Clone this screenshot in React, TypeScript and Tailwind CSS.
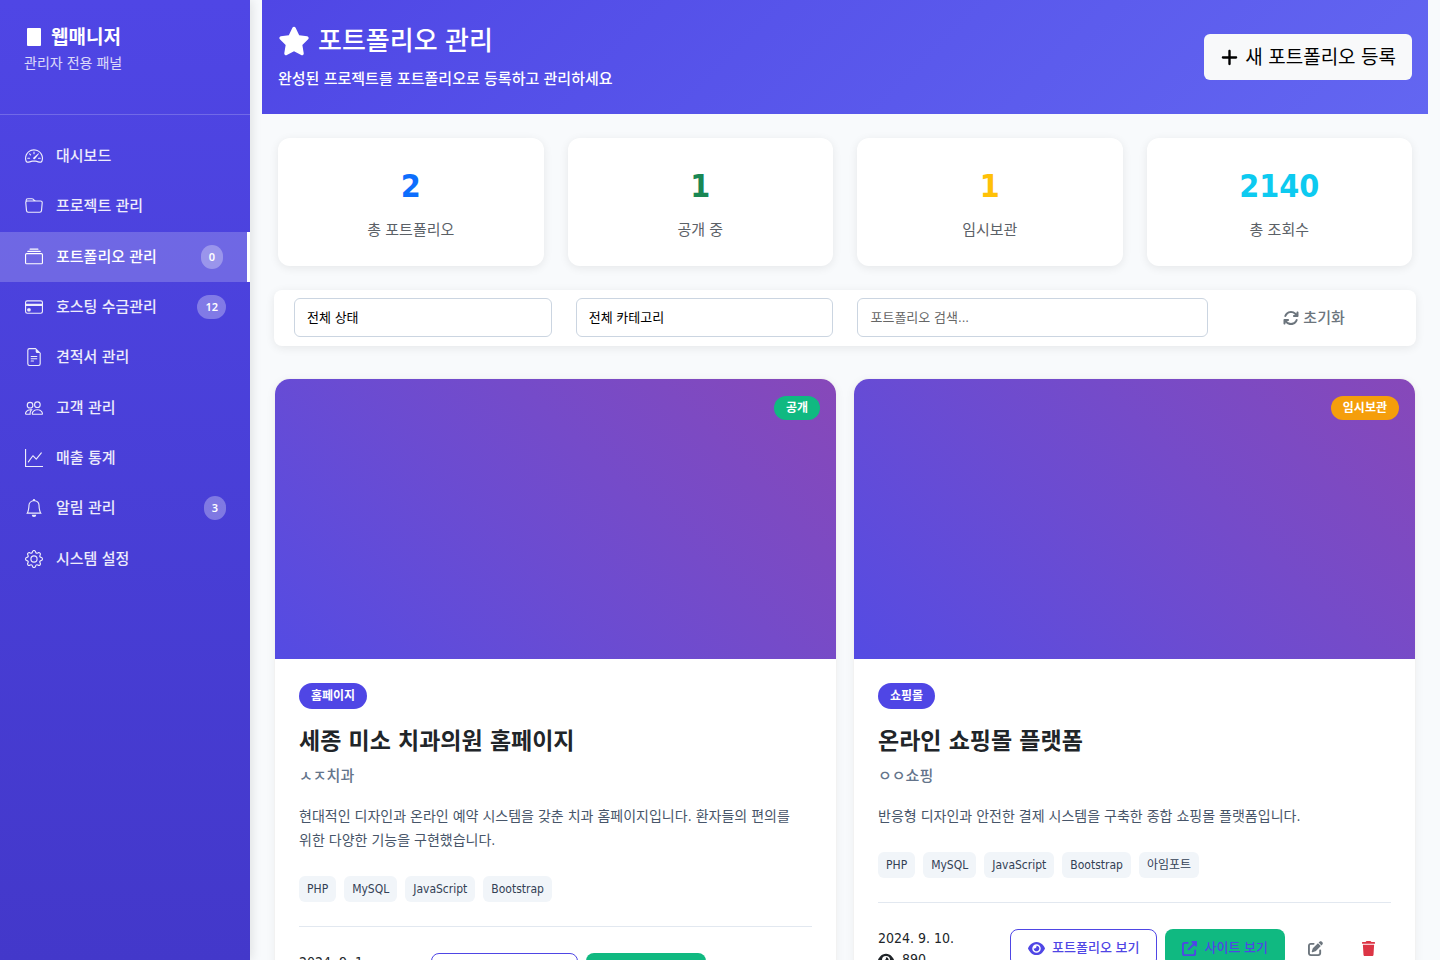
import React from 'react';
import {
  BsSpeedometer2,
  BsFolder,
  BsCollection,
  BsCreditCard,
  BsFileEarmarkText,
  BsPeople,
  BsGraphUp,
  BsBell,
  BsGear,
} from 'react-icons/bs';
import {
  FaStar,
  FaPlus,
  FaArrowsRotate,
  FaEye,
  FaUpRightFromSquare,
  FaPenToSquare,
  FaTrash,
} from 'react-icons/fa6';
import type { IconType } from 'react-icons';

interface MenuItem {
  label: string;
  icon: IconType;
  badge?: number;
  active?: boolean;
}

interface Portfolio {
  id: number;
  status: string;
  statusColor: string;
  category: string;
  title: string;
  client: string;
  description: string;
  tags: string[];
  date: string;
  views: number;
}

const MENU: MenuItem[] = [
  { label: '대시보드', icon: BsSpeedometer2 },
  { label: '프로젝트 관리', icon: BsFolder },
  { label: '포트폴리오 관리', icon: BsCollection, badge: 0, active: true },
  { label: '호스팅 수금관리', icon: BsCreditCard, badge: 12 },
  { label: '견적서 관리', icon: BsFileEarmarkText },
  { label: '고객 관리', icon: BsPeople },
  { label: '매출 통계', icon: BsGraphUp },
  { label: '알림 관리', icon: BsBell, badge: 3 },
  { label: '시스템 설정', icon: BsGear },
];

const STATS = [
  { label: '총 포트폴리오', value: 2, color: 'text-[#0d6efd]' },
  { label: '공개 중', value: 1, color: 'text-[#198754]' },
  { label: '임시보관', value: 1, color: 'text-[#ffc107]' },
  { label: '총 조회수', value: 2140, color: 'text-[#0dcaf0]' },
];

const PORTFOLIOS: Portfolio[] = [
  {
    id: 1,
    status: '공개',
    statusColor: 'bg-[#10b981]',
    category: '홈페이지',
    title: '세종 미소 치과의원 홈페이지',
    client: 'ㅅㅈ치과',
    description:
      '현대적인 디자인과 온라인 예약 시스템을 갖춘 치과 홈페이지입니다. 환자들의 편의를 위한 다양한 기능을 구현했습니다.',
    tags: ['PHP', 'MySQL', 'JavaScript', 'Bootstrap'],
    date: '2024. 9. 1.',
    views: 1250,
  },
  {
    id: 2,
    status: '임시보관',
    statusColor: 'bg-[#f59e0b]',
    category: '쇼핑몰',
    title: '온라인 쇼핑몰 플랫폼',
    client: 'ㅇㅇ쇼핑',
    description: '반응형 디자인과 안전한 결제 시스템을 구축한 종합 쇼핑몰 플랫폼입니다.',
    tags: ['PHP', 'MySQL', 'JavaScript', 'Bootstrap', '아임포트'],
    date: '2024. 9. 10.',
    views: 890,
  },
];

const Sidebar: React.FC = () => (
  <aside className="sticky top-0 z-10 h-screen w-[250px] shrink-0 bg-linear-to-b from-[#4f46e5] to-[#4338ca] text-white shadow-[2px_0_10px_rgba(0,0,0,0.1)]">
    <div className="h-[115px] border-b border-white/20 px-6 pt-6">
      <div className="flex h-[26px] items-center text-[19px] font-bold">
        <span className="ml-[3px] mr-2.5 h-[18px] w-3.5 rounded-[1px] bg-white"></span>
        웹매니저
      </div>
      <p className="mt-[3px] text-sm text-white/80">관리자 전용 패널</p>
    </div>

    <nav className="mt-4 grid h-[453px] auto-rows-fr">
      {MENU.map(({ label, icon: Icon, badge, active }) => (
        <a
          key={label}
          href="#"
          className={`flex items-center px-6 text-[15px] font-medium ${
            active ? 'border-r-3 border-white bg-white/20 text-white' : 'text-white/90'
          }`}
        >
          <Icon className="mr-3 size-5 p-px" />
          <span className="flex-1">{label}</span>
          {badge !== undefined && (
            <span className="rounded-full bg-white/30 px-2 py-1 font-['Noto_Sans',sans-serif] text-[11px] leading-4 font-semibold text-white">
              {badge}
            </span>
          )}
        </a>
      ))}
    </nav>
  </aside>
);

const PageHeader: React.FC = () => (
  <header className="flex h-[114px] items-center justify-between bg-linear-135 from-[#4f46e5] to-[#6366f1] px-4 text-white">
    <div>
      <h1 className="mb-2 flex items-center gap-2 text-[26px] leading-9 font-medium">
        <FaStar className="size-8" />
        포트폴리오 관리
      </h1>
      <p className="text-[15px] leading-6 font-medium">완성된 프로젝트를 포트폴리오로 등록하고 관리하세요</p>
    </div>
    <button className="flex h-[46px] items-center gap-1.5 rounded-md bg-[#f8f9fa] px-4 text-[19px] text-black">
      <FaPlus className="size-[19px]" />
      새 포트폴리오 등록
    </button>
  </header>
);

const Filters: React.FC = () => (
  <form className="mx-3 mt-6 grid h-14 grid-cols-[258fr_258fr_351fr_164fr] items-start gap-6 rounded-lg bg-white px-5 pt-2 text-[13px] shadow-[0_2px_10px_rgba(0,0,0,0.08)]">
    <select
      aria-label="상태"
      className="h-[39px] w-full appearance-none rounded-md border border-[#cbd5e1] bg-white px-3 text-black"
    >
      <option>전체 상태</option>
    </select>
    <select
      aria-label="카테고리"
      className="h-[39px] w-full appearance-none rounded-md border border-[#cbd5e1] bg-white px-3 text-black"
    >
      <option>전체 카테고리</option>
    </select>
    <input
      type="text"
      aria-label="포트폴리오 검색"
      placeholder="포트폴리오 검색..."
      className="h-[39px] w-full rounded-md border border-[#cbd5e1] bg-white px-3 placeholder:text-[#666]"
    />
    <button
      type="reset"
      className="flex h-10 w-full items-center justify-center gap-1 text-[15px] font-medium text-[#6c757d]"
    >
      <FaArrowsRotate className="size-4" />
      초기화
    </button>
  </form>
);

const PortfolioCard: React.FC<{ item: Portfolio }> = ({ item }) => (
  <article className="overflow-hidden rounded-2xl border border-black/5 bg-white shadow-[0_2px_10px_rgba(0,0,0,0.05)]">
    <div className="flex h-[280px] items-start justify-end bg-linear-45 from-[#544be3] to-[#8748b9] px-4 pt-[17px]">
      <span className={`rounded-full px-3 py-1 text-xs leading-4 font-bold text-white ${item.statusColor}`}>
        {item.status}
      </span>
    </div>

    <div className="p-6">
      <span className="inline-block rounded-full bg-[#4f46e5] px-3 py-[5px] text-xs leading-4 font-bold text-white">
        {item.category}
      </span>
      <h2 className="mt-[18px] text-[23px] leading-7 font-bold text-[#212529]">{item.title}</h2>
      <p className="mt-[9px] text-[15px] leading-6 font-medium text-[#64748b]">{item.client}</p>
      <p className="mt-4 text-sm leading-6 break-keep text-[#475569]">{item.description}</p>

      <ul className="mt-6 flex flex-wrap gap-2">
        {item.tags.map((tag) => (
          <li key={tag} className="rounded-md bg-[#f1f5f9] px-2 py-[5px] text-xs leading-4 text-[#334155]">
            {tag}
          </li>
        ))}
      </ul>

      <div className="mt-6 flex items-start justify-between border-t border-[#e2e8f0] pt-6">
        <div className="pt-px text-sm leading-[21px] text-[#212529]">
          <div>{item.date}</div>
          <div className="flex items-center gap-2">
            <FaEye className="size-4" />
            {item.views}
          </div>
        </div>
        <div className="flex gap-2 pt-0.5 text-[13px] font-medium">
          <button className="flex h-[38px] items-center gap-[7px] rounded-lg border border-[#4f46e5] px-[17px] text-[#4f46e5]">
            <FaEye className="size-[17px]" />
            포트폴리오 보기
          </button>
          <a href="#" className="flex h-[38px] items-center gap-[7px] rounded-lg bg-[#10b981] px-[17px] text-[#4f46e5]">
            <FaUpRightFromSquare className="size-[15px]" />
            사이트 보기
          </a>
          <button aria-label="수정" className="flex h-[38px] w-[45px] items-center justify-center text-[#6c757d]">
            <FaPenToSquare className="size-[15px]" />
          </button>
          <button aria-label="삭제" className="flex h-[38px] w-[45px] items-center justify-center text-[#dc3545]">
            <FaTrash className="size-[15px]" />
          </button>
        </div>
      </div>
    </div>
  </article>
);

export default function App() {
  return (
    <div className="flex min-h-screen items-start bg-[#f8fafc] font-['DejaVu_Sans_Condensed','Noto_Sans_CJK_KR',sans-serif]">
      <Sidebar />
      <main className="min-w-0 flex-1 px-3 pb-6">
        <PageHeader />

        <section className="grid grid-cols-4 gap-6 px-4 pt-6">
          {STATS.map((stat) => (
            <div
              key={stat.label}
              className="h-32 rounded-xl bg-white pt-7 text-center shadow-[0_2px_10px_rgba(0,0,0,0.08)]"
            >
              <div className={`text-[32px] leading-10 font-bold ${stat.color}`}>{stat.value}</div>
              <div className="mt-3 text-[15px] leading-6 text-[#5b6167]">{stat.label}</div>
            </div>
          ))}
        </section>

        <Filters />

        <section className="mx-3 mt-8 grid grid-cols-2 gap-4">
          {PORTFOLIOS.map((item) => (
            <PortfolioCard key={item.id} item={item} />
          ))}
        </section>
      </main>
    </div>
  );
}
